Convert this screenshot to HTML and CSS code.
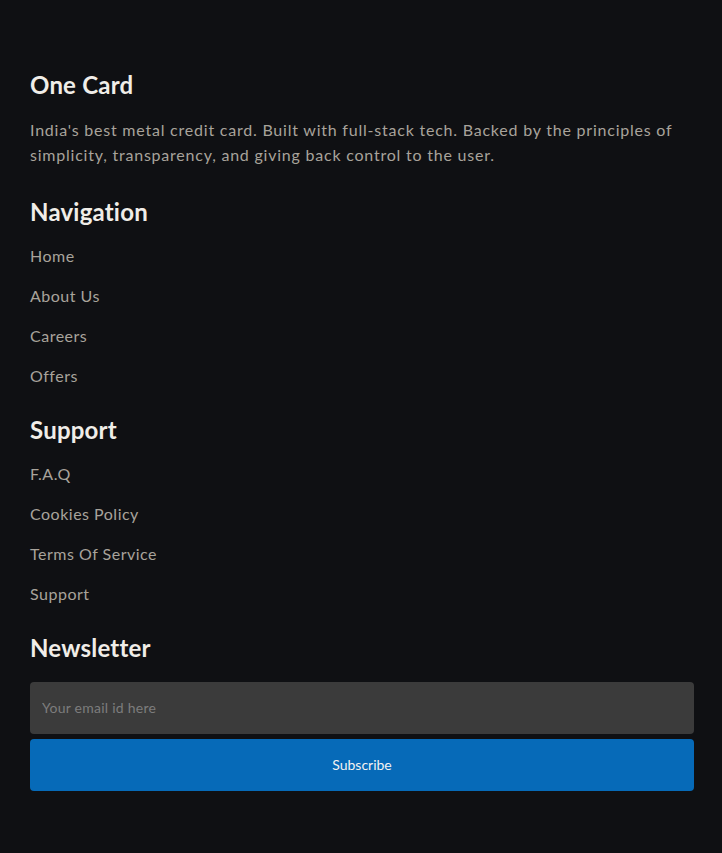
FILE: index.html
```html
<!DOCTYPE html>
<html lang="en">
<head>
<meta charset="utf-8">
<title>One Card Footer</title>
<link rel="stylesheet" href="styles.css">
</head>
<body>
<footer class="footer">
  <section class="block block-about">
    <h2 class="block-title">One Card</h2>
    <p class="about-text">India's best metal credit card. Built with full-stack tech. Backed by the principles of simplicity, transparency, and giving back control to the user.</p>
  </section>
  <section class="block">
    <h2 class="block-title">Navigation</h2>
    <ul class="links">
      <li><a class="link" href="#">Home</a></li>
      <li><a class="link" href="#">About Us</a></li>
      <li><a class="link" href="#">Careers</a></li>
      <li><a class="link" href="#">Offers</a></li>
    </ul>
  </section>
  <section class="block">
    <h2 class="block-title">Support</h2>
    <ul class="links">
      <li><a class="link" href="#">F.A.Q</a></li>
      <li><a class="link" href="#">Cookies Policy</a></li>
      <li><a class="link" href="#">Terms Of Service</a></li>
      <li><a class="link" href="#">Support</a></li>
    </ul>
  </section>
  <section class="block">
    <h2 class="block-title newsletter-title">Newsletter</h2>
    <form class="newsletter">
      <input class="email" type="email" placeholder="Your email id here">
      <button class="subscribe" type="button">Subscribe</button>
    </form>
  </section>
</footer>
</body>
</html>
```
FILE: styles.css
```css
html, body {
  margin: 0;
  padding: 0;
  background: #0f1013;
}
body {
  font-family: "Lato", "Liberation Sans", sans-serif;
  min-height: 853px;
}
.footer {
  display: flex;
  flex-direction: column;
  gap: 27px;
  padding: 70px 28px 60px 30px;
}
.block-about {
  margin-bottom: 3px;
}
.block-title {
  margin: 0 0 18px;
  font-size: 24px;
  line-height: 29px;
  font-weight: 700;
  letter-spacing: 0.2px;
  color: #f0ede8;
}
.about-text {
  margin: 0;
  font-size: 16px;
  line-height: 25px;
  letter-spacing: 0.78px;
  color: #a8a39b;
}
.links {
  list-style: none;
  margin: 0;
  padding: 0;
  display: flex;
  flex-direction: column;
  gap: 16px;
}
.link {
  display: block;
  font-size: 16px;
  line-height: 24px;
  letter-spacing: 0.5px;
  color: #a8a39b;
  text-decoration: none;
}
.newsletter-title {
  margin-bottom: 20px;
}
.newsletter {
  display: flex;
  flex-direction: column;
  gap: 5px;
}
.email {
  box-sizing: border-box;
  height: 52px;
  width: 100%;
  border: none;
  border-radius: 4px;
  background: #3b3b3b;
  padding: 0 12px 2px;
  font-family: inherit;
  font-size: 14px;
  letter-spacing: 0.25px;
  color: #ddd;
  outline: none;
}
.email::placeholder {
  color: #7d7d7d;
}
.subscribe {
  height: 52px;
  width: 100%;
  border: none;
  border-radius: 4px;
  background: #066ab8;
  color: #f2f2f2;
  font-family: inherit;
  font-size: 14px;
  padding: 0 0 2px;
  cursor: pointer;
}
```
